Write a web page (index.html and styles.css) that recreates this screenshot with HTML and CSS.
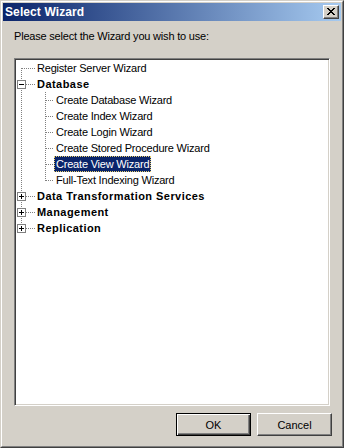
FILE: index.html
```html
<!DOCTYPE html>
<html lang="en">

<head>
    <meta charset="utf-8">
    <title>Select Wizard</title>
    <link rel="stylesheet" href="styles.css">
</head>

<body>
    <div class="window">
        <div class="frame">
            <div class="titlebar">
                <span class="title">Select Wizard</span>
                <span class="close-btn">
                    <svg width="8" height="7" viewBox="0 0 8 7">
                        <path d="M0 0h2v1h1v1h2v-1h1v-1h2v1h-1v1h-1v1h-1v1h1v1h1v1h1v1h-2v-1h-1v-1h-2v1h-1v1h-2v-1h1v-1h1v-1h1v-1h-1v-1h-1v-1h-1z" fill="#000"/>
                    </svg>
                </span>
            </div>

            <div class="prompt">Please select the Wizard you wish to use:</div>

            <div class="tree">
                <div class="row">
                    <span class="g g-first"></span>
                    <span class="label">Register Server Wizard</span>
                </div>
                <div class="row">
                    <span class="g g-tee"><span class="box minus"></span></span>
                    <span class="label bold">Database</span>
                </div>
                <div class="row">
                    <span class="g g-pass"></span><span class="g2 g-tee"></span>
                    <span class="label">Create Database Wizard</span>
                </div>
                <div class="row">
                    <span class="g g-pass"></span><span class="g2 g-tee"></span>
                    <span class="label">Create Index Wizard</span>
                </div>
                <div class="row">
                    <span class="g g-pass"></span><span class="g2 g-tee"></span>
                    <span class="label">Create Login Wizard</span>
                </div>
                <div class="row">
                    <span class="g g-pass"></span><span class="g2 g-tee"></span>
                    <span class="label">Create Stored Procedure Wizard</span>
                </div>
                <div class="row">
                    <span class="g g-pass"></span><span class="g2 g-tee"></span>
                    <span class="label selected">Create View Wizard</span>
                </div>
                <div class="row">
                    <span class="g g-pass"></span><span class="g2 g-last"></span>
                    <span class="label">Full-Text Indexing Wizard</span>
                </div>
                <div class="row">
                    <span class="g g-tee"><span class="box plus"></span></span>
                    <span class="label bold">Data Transformation Services</span>
                </div>
                <div class="row">
                    <span class="g g-tee"><span class="box plus"></span></span>
                    <span class="label bold">Management</span>
                </div>
                <div class="row">
                    <span class="g g-last"><span class="box plus"></span></span>
                    <span class="label bold">Replication</span>
                </div>
            </div>

            <div class="buttons">
                <button class="btn default">OK</button>
                <button class="btn">Cancel</button>
            </div>
        </div>
    </div>
</body>
</html>
```

FILE: styles.css
```css
body {
    margin: 0;
    font-family: "Liberation Sans", Arial, sans-serif;
    font-size: 11px;
    color: #000;
    background-color: #d4d0c8;
}

.window {
    width: 344px;
    height: 448px;
    box-sizing: border-box;
    border: 1px solid;
    border-color: #d4d0c8 #404040 #404040 #d4d0c8;
}

.frame {
    height: 100%;
    box-sizing: border-box;
    border: 1px solid;
    border-color: #fff #808080 #808080 #fff;
    padding: 1px;
    display: flex;
    flex-direction: column;
}

.titlebar {
    height: 18px;
    display: flex;
    align-items: center;
    justify-content: space-between;
    padding: 0 2px 0 2px;
    background: linear-gradient(to right, #0a246a, #a6caf0);
}

.title {
    color: #fff;
    font-weight: bold;
    font-size: 12px;
    letter-spacing: 0.1px;
}

.close-btn {
    width: 16px;
    height: 14px;
    box-sizing: border-box;
    background-color: #d4d0c8;
    border: 1px solid;
    border-color: #fff #404040 #404040 #fff;
    box-shadow: inset -1px -1px 0 #808080;
    display: flex;
    align-items: center;
    justify-content: center;
    padding: 0 1px 1px 0;
}

.prompt {
    margin: 7px 0 14px 11px;
    line-height: 16px;
    letter-spacing: -0.2px;
}

.tree {
    margin-left: 11px;
    width: 316px;
    height: 348px;
    box-sizing: border-box;
    background-color: #fff;
    border: 1px solid;
    border-color: #808080 #fff #fff #808080;
    box-shadow: inset 1px 1px 0 #404040, inset -1px -1px 0 #d4d0c8;
    padding: 1px;
}

.row {
    height: 16px;
    display: flex;
    align-items: center;
}

.g,
.g2 {
    width: 19px;
    height: 16px;
    flex: none;
    display: flex;
    align-items: flex-start;
    background-repeat: no-repeat;
}

/* dotted connector lines */
.g {
    --vx: 5px;
    --hx: 6px;
    --hw: 13px;
}

.g2 {
    --vx: 10px;
    --hx: 11px;
    --hw: 8px;
}

.g-pass {
    background-image: repeating-linear-gradient(to bottom, #808080 0 1px, transparent 1px 2px);
    background-size: 1px 16px;
    background-position: var(--vx) 0;
}

.g-tee {
    background-image:
        repeating-linear-gradient(to bottom, #808080 0 1px, transparent 1px 2px),
        repeating-linear-gradient(to right, #808080 0 1px, transparent 1px 2px);
    background-size: 1px 16px, var(--hw) 1px;
    background-position: var(--vx) 0, var(--hx) 8px;
}

.g-first {
    background-image:
        repeating-linear-gradient(to bottom, #808080 0 1px, transparent 1px 2px),
        repeating-linear-gradient(to right, #808080 0 1px, transparent 1px 2px);
    background-size: 1px 8px, var(--hw) 1px;
    background-position: var(--vx) 8px, var(--hx) 8px;
}

.g-last {
    background-image:
        repeating-linear-gradient(to bottom, #808080 0 1px, transparent 1px 2px),
        repeating-linear-gradient(to right, #808080 0 1px, transparent 1px 2px);
    background-size: 1px 9px, var(--hw) 1px;
    background-position: var(--vx) 0, var(--hx) 8px;
}

.box {
    width: 9px;
    height: 9px;
    box-sizing: border-box;
    margin: 4px 0 0 1px;
    border: 1px solid #808080;
    background-color: #fff;
    background-repeat: no-repeat;
}

.minus {
    background-image: linear-gradient(#000, #000);
    background-size: 5px 1px;
    background-position: 1px 3px;
}

.plus {
    background-image: linear-gradient(#000, #000), linear-gradient(#000, #000);
    background-size: 5px 1px, 1px 5px;
    background-position: 1px 3px, 3px 1px;
}

.label {
    padding: 0 2px;
    line-height: 16px;
    height: 16px;
    box-sizing: border-box;
    white-space: nowrap;
    letter-spacing: -0.2px;
}

.bold {
    font-weight: bold;
    letter-spacing: 0.45px;
}

.selected {
    background-color: #0a246a;
    color: #fff;
    border: 1px dotted #e8d070;
    padding: 0 1px;
    line-height: 14px;
}

.buttons {
    margin-top: 7px;
    margin-right: 9px;
    display: flex;
    justify-content: flex-end;
    gap: 6px;
}

.btn {
    width: 75px;
    height: 23px;
    box-sizing: border-box;
    margin: 0;
    padding: 0;
    font-family: "Liberation Sans", Arial, sans-serif;
    font-size: 11px;
    color: #000;
    background-color: #d4d0c8;
    border: 1px solid;
    border-color: #fff #404040 #404040 #fff;
    box-shadow: inset -1px -1px 0 #808080;
}

.btn.default {
    border: 1px solid #000;
    box-shadow: inset 1px 1px 0 #fff, inset -1px -1px 0 #404040, inset -2px -2px 0 #808080;
}
```
